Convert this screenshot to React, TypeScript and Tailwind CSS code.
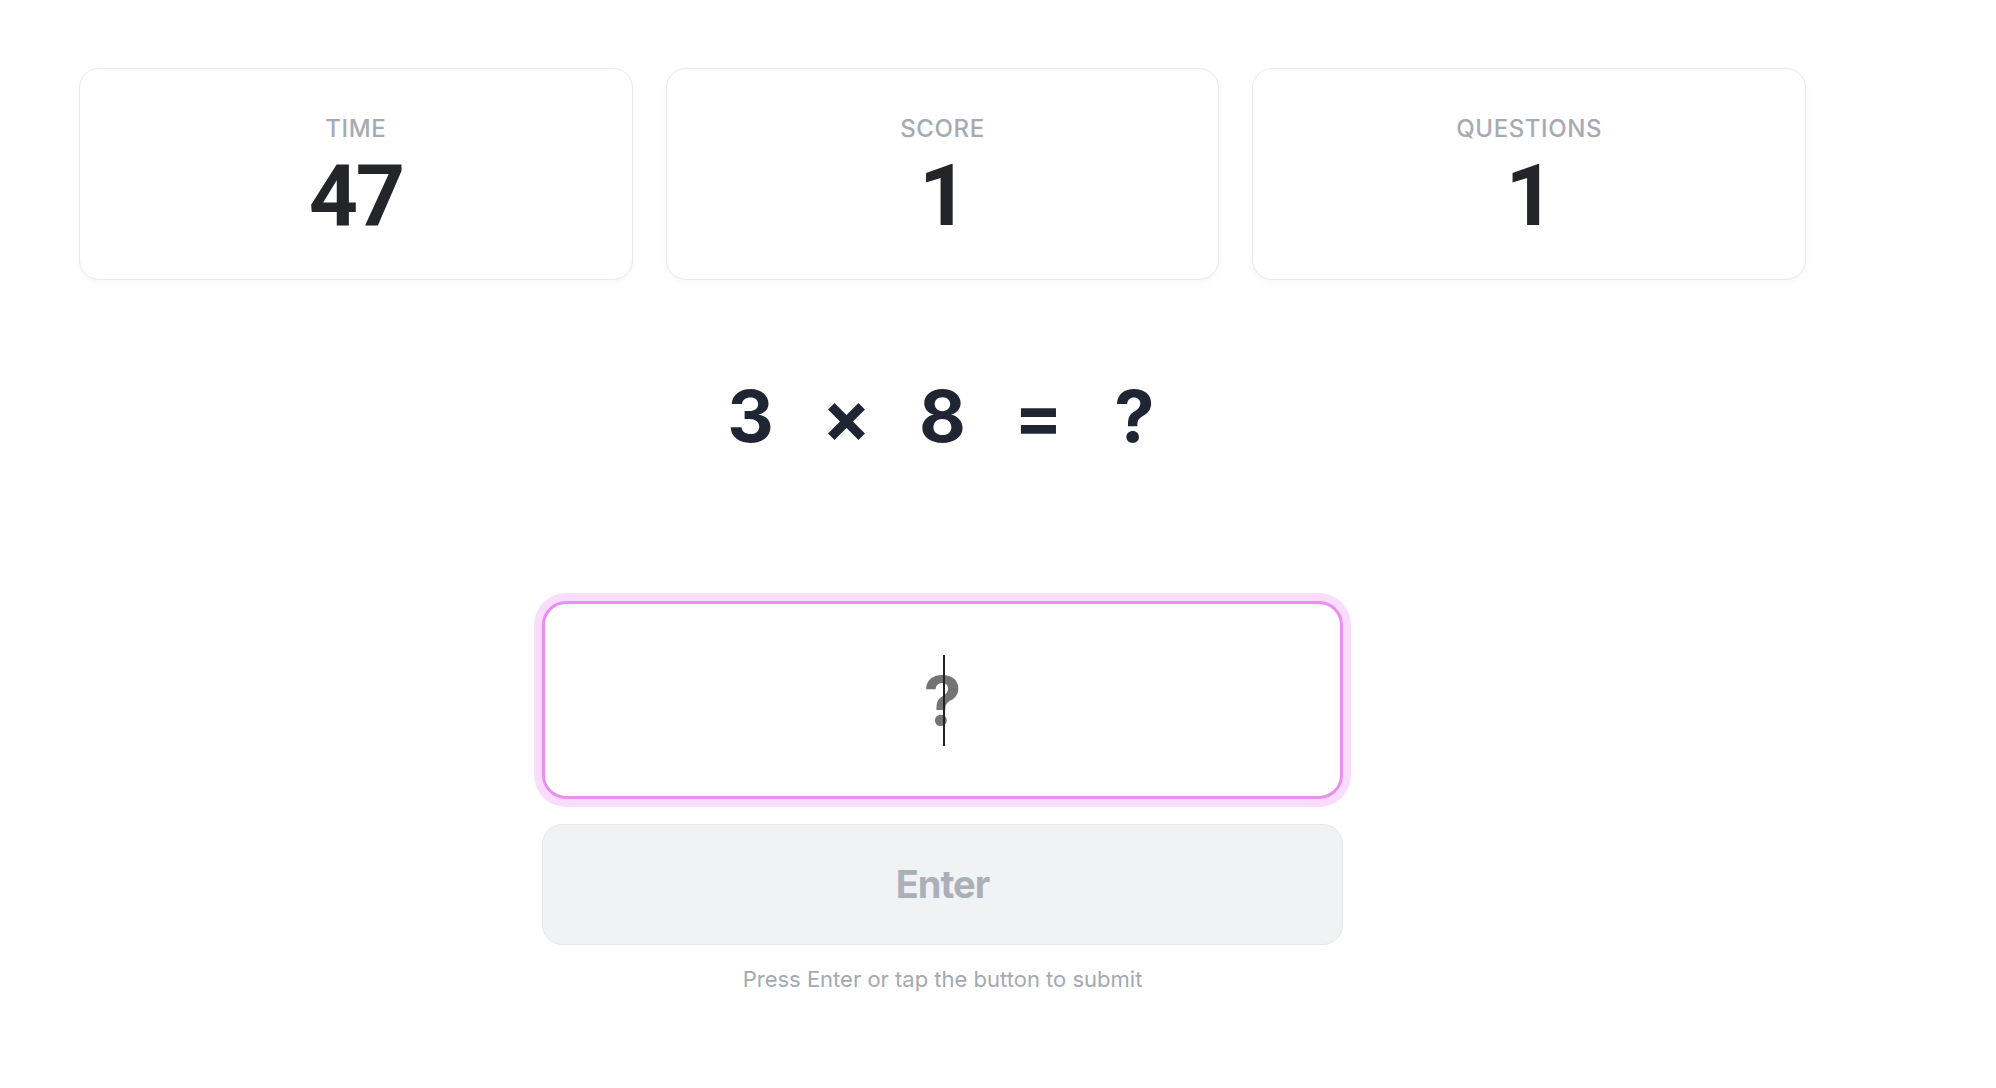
import React from "react";

const stats = [
  { label: "TIME", value: "47" },
  { label: "SCORE", value: "1" },
  { label: "QUESTIONS", value: "1" },
];

const tokens = ["3", "×", "8", "=", "?"];

export default function App() {
  return (
    <div className="min-h-screen bg-white font-['Inter',sans-serif]">
      <div className="pl-[79px] pt-[68px]">
        <div className="w-[1727px] flex flex-col">
          <div className="grid grid-cols-3 gap-[33px]">
            {stats.map((s) => (
              <div
                key={s.label}
                className="h-[212px] pt-[3px] rounded-[20px] border border-[#e8e9ec] bg-white shadow-[0_2px_6px_rgba(0,0,0,0.04)] flex flex-col items-center justify-center"
              >
                <div className="text-2xl leading-8 font-medium tracking-wide text-[#a6abb3]">
                  {s.label}
                </div>
                <div className="mt-[8px] text-[86px] leading-none font-bold text-[#232529] tracking-tight font-['Roboto',sans-serif]">
                  {s.value}
                </div>
              </div>
            ))}
          </div>

          <div className="mt-[100px] flex justify-center">
            {tokens.map((t, i) => (
              <div
                key={i}
                className="w-[96px] text-center text-7xl leading-none font-bold text-[#1f2533]"
              >
                {t}
              </div>
            ))}
          </div>

          <div className="mt-[149px] flex flex-col items-center">
            <div className="relative w-[801px] h-[198px] rounded-3xl border-[3px] border-[#e98ff3] ring-8 ring-[#fadcfc] bg-white flex items-center justify-center">
              <span className="text-[68px] leading-none font-bold text-[#747474]">?</span>
              <div className="absolute left-1/2 top-[51px] w-[2px] h-[91px] bg-[#222222]" />
            </div>

            <button className="mt-[25px] w-[801px] h-[121px] rounded-[20px] border border-[#e5e7eb] bg-[#f1f2f4] flex items-center justify-center">
              <span className="text-[38px] font-bold tracking-tight text-[#abb0b8]">Enter</span>
            </button>

            <p className="mt-5 text-[22px] leading-7 text-[#a5a9b0]">
              Press Enter or tap the button to submit
            </p>
          </div>
        </div>
      </div>
    </div>
  );
}
